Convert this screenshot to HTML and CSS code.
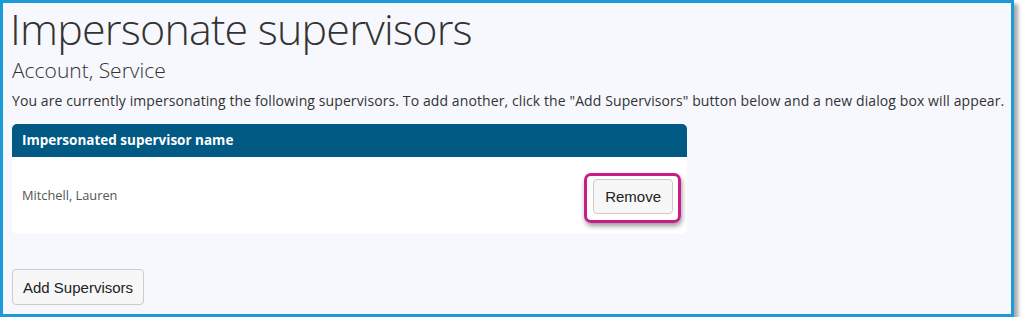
FILE: index.html
```html
<!DOCTYPE html>
<html lang="en">

<head>
    <meta charset="UTF-8">
    <meta name="viewport" content="width=device-width, initial-scale=1.0">
    <title>Impersonate supervisors</title>
    <link rel="stylesheet" href="styles.css">
</head>

<body>

    <div class="frame">
        <h1 class="page-title">Impersonate supervisors</h1>
        <h2 class="page-subtitle">Account, Service</h2>
        <p class="intro">You are currently impersonating the following supervisors. To add another, click the "Add Supervisors" button below and a new dialog box will appear.</p>

        <div class="sup-table">
            <div class="sup-head">Impersonated supervisor name</div>
            <div class="sup-row">
                <span class="sup-name">Mitchell, Lauren</span>
                <span class="highlight">
                    <button class="btn">Remove</button>
                </span>
            </div>
        </div>

        <button class="btn btn-add">Add Supervisors</button>
    </div>

</body>

</html>
```

FILE: styles.css
```css
* {
    margin: 0;
    padding: 0;
    box-sizing: border-box;
}

body {
    background: #ffffff;
    font-family: "Open Sans", "Noto Sans", sans-serif;
    color: #333;
}

/* outer screenshot frame */
.frame {
    width: 1014px;
    height: 317px;
    border: 3px solid #1a9ad6;
    background: #f7f8fd;
    padding: 0 9px;
    box-shadow: 4px 4px 4px rgba(0, 0, 0, 0.35);
}

.page-title {
    font-weight: 300;
    font-size: 43px;
    line-height: 52px;
    letter-spacing: -0.8px;
    color: #333;
    margin-left: -2px;
}

.page-subtitle {
    font-weight: 300;
    font-size: 21px;
    line-height: 26px;
    color: #333;
    margin-top: 2px;
}

.intro {
    font-size: 14px;
    line-height: 20px;
    letter-spacing: 0.1px;
    white-space: nowrap;
    margin-top: 8px;
}

/* supervisors table */
.sup-table {
    width: 675px;
    margin-top: 13px;
}

.sup-head {
    background: #005a84;
    color: #fff;
    font-weight: bold;
    font-size: 13.5px;
    height: 33px;
    line-height: 33px;
    padding-left: 10px;
    border-radius: 5px 5px 0 0;
}

.sup-row {
    background: #fff;
    height: 77px;
    display: flex;
    align-items: center;
    justify-content: space-between;
    padding: 0 6px 0 10px;
    border-radius: 0 0 5px 5px;
}

.sup-name {
    font-size: 12.8px;
    color: #555;
    margin-top: -1px;
}

.highlight {
    display: block;
    border: 3px solid #c71d8a;
    border-radius: 7px;
    padding: 3px 5px 6px 6px;
    box-shadow: 1px 3px 5px rgba(0, 0, 0, 0.4);
    margin-top: 4px;
}

.btn {
    display: block;
    font-family: "Liberation Sans", Arial, sans-serif;
    font-size: 15px;
    color: #222;
    background: #f7f7f7;
    border: 1px solid #ccc;
    border-radius: 4px;
    height: 35px;
    padding: 0 11px;
}

.btn-add {
    margin-top: 35px;
    height: 36px;
    padding: 0 10px;
}
```
